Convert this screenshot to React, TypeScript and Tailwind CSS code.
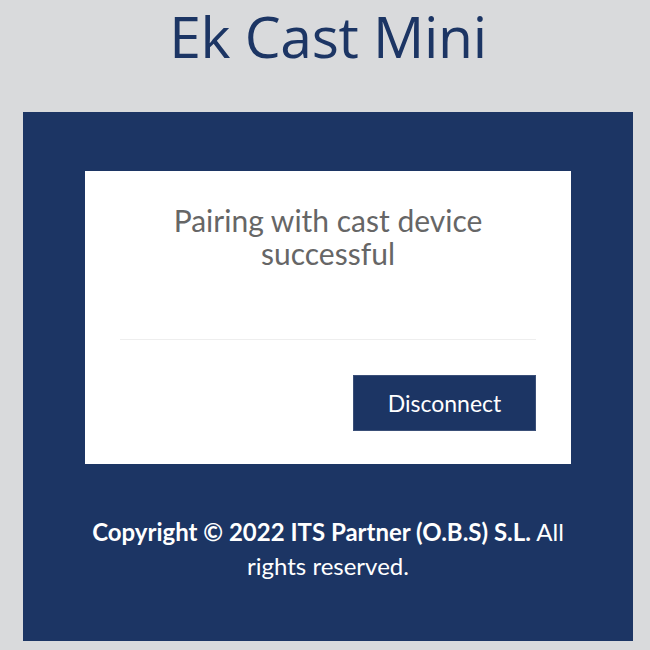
export default function App() {
  return (
    <div className="min-h-[650px] w-[650px] bg-[#d9dadc] overflow-hidden" style={{ fontFamily: '"Open Sans", "Noto Sans", sans-serif' }}>
      <header className="h-[112px] flex items-start justify-center">
        <h1 className="text-[57px] leading-[68px] mt-[2px] ml-[6px] text-[#1c3564] tracking-[-0.3px]">Ek Cast Mini</h1>
      </header>
      <main className="ml-[23px] w-[610px] h-[529px] bg-[#1c3564] pt-[59px] px-[62px] flex flex-col">
        <section className="bg-white h-[293px] flex flex-col pt-[33px] px-[35px]">
          <p className="text-center text-[30px] leading-[33px] text-[#666] px-[20px]" style={{ fontFamily: 'Lato, "Open Sans", sans-serif' }}>
            Pairing with cast device successful
          </p>
          <div className="mt-[69px] h-px bg-[#eeeeee]" />
          <div className="flex justify-end mt-[35px]">
            <button className="w-[183px] h-[56px] bg-[#1c3564] border border-[#3a4f78] text-white text-[23px]" style={{ fontFamily: 'Lato, "Open Sans", sans-serif' }}>
              Disconnect
            </button>
          </div>
        </section>
        <footer className="mt-[51px] text-center text-white text-[24px] leading-[34px]" style={{ fontFamily: 'Lato, "Open Sans", sans-serif' }}>
          <strong className="font-bold">Copyright © 2022 ITS Partner (O.B.S) S.L.</strong> All rights reserved.
        </footer>
      </main>
    </div>
  );
}
